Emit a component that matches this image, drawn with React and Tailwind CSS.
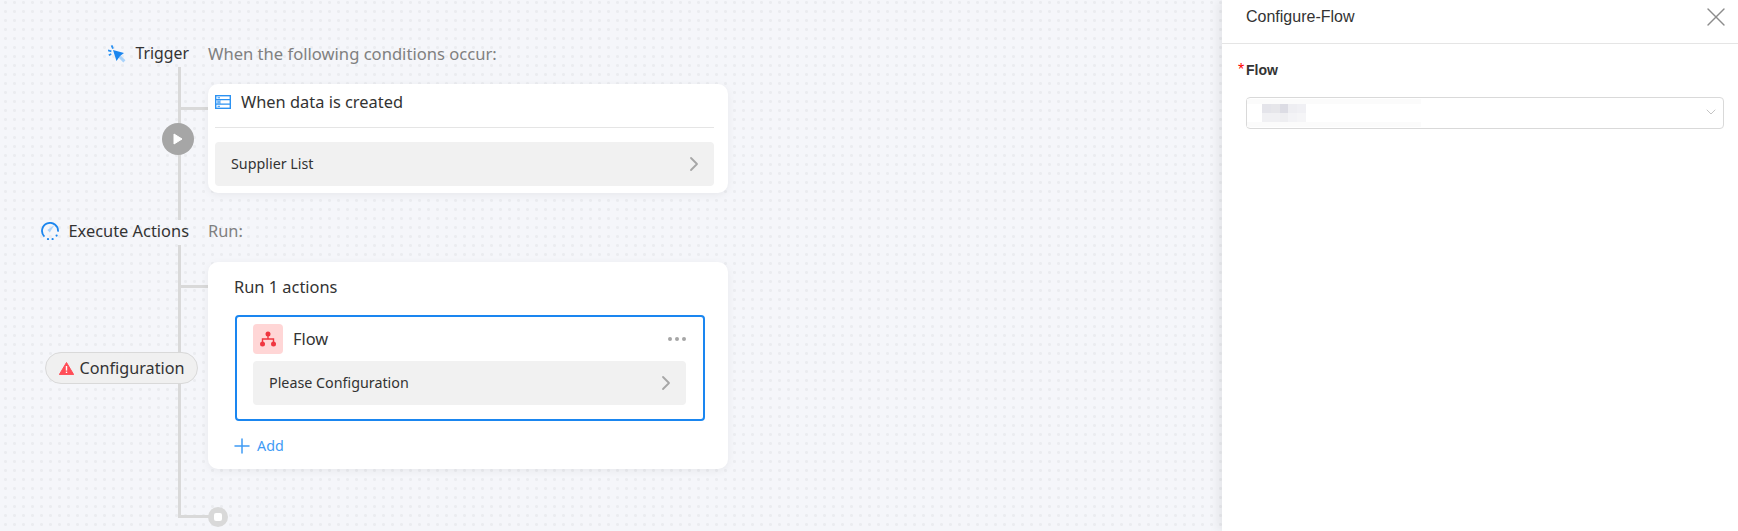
import React from 'react';
import { ChevronRight, ChevronDown, Plus, X } from 'lucide-react';

const sansFont = "font-['Noto_Sans','Open_Sans',sans-serif]";
const arialFont = "font-['Liberation_Sans',Arial,sans-serif]";

// Iconos dibujados a mano
const TriggerIcon = () => (
  <svg width="18" height="18" viewBox="0 0 18 18" fill="none">
    <path d="M11 11 L16.4 16.4" stroke="#a9d3fb" strokeWidth="3" />
    <path d="M5 5 L16 8 L12 11 L8.5 16 Z" fill="#1c86ee" />
    <path d="M3.6 0.4 L5 3.6 M0 5.4 L3.4 6.4 M0.8 10.2 L3.2 9" stroke="#2c92f2" strokeWidth="1.8" />
  </svg>
);

const ExecuteIcon = () => (
  <svg width="18" height="18" viewBox="0 0 18 18" fill="none">
    <path d="M3.4 14.6 A8 8 0 1 1 17 9.6" stroke="#1c86ee" strokeWidth="1.8" />
    <circle cx="7" cy="17" r="1.1" fill="#1c86ee" />
    <circle cx="11.6" cy="17" r="1.1" fill="#1c86ee" />
    <circle cx="15.6" cy="13.6" r="1.1" fill="#1c86ee" />
    <path d="M13.4 3 L6.4 8 L8.8 10.6 Z" fill="#a9d3fb" />
  </svg>
);

const TableIcon = () => (
  <svg width="16" height="14" viewBox="0 0 16 14" fill="none">
    <rect x="0.7" y="0.7" width="14.6" height="12.6" stroke="#2c92f2" strokeWidth="1.4" />
    <rect x="1" y="5" width="5" height="4" fill="#a9d3fb" />
    <path d="M1 4.6 H15 M1 9.2 H15" stroke="#2c92f2" strokeWidth="1.2" />
    <path d="M2.6 2.8 H5 M2.6 7 H5 M2.6 11.3 H5" stroke="#2c92f2" strokeWidth="1" />
  </svg>
);

const FlowIcon = () => (
  <svg width="16" height="16" viewBox="0 0 16 16" fill="#f0353f">
    <circle cx="8" cy="3" r="2.5" />
    <circle cx="2.5" cy="13" r="2.5" />
    <circle cx="13.5" cy="13" r="2.5" />
    <path d="M7.3 4 H8.7 V7.3 H14.2 V11 H12.8 V8.7 H3.2 V11 H1.8 V7.3 H7.3 Z" />
  </svg>
);

const WarningIcon = () => (
  <svg width="15" height="13" viewBox="0 0 15 13">
    <path d="M7.5 0.5 L14.7 12.6 H0.3 Z" fill="#ff4d57" stroke="#ff4d57" strokeLinejoin="round" />
    <rect x="6.8" y="4" width="1.4" height="4.6" fill="#fff" />
    <rect x="6.8" y="9.6" width="1.4" height="1.4" fill="#fff" />
  </svg>
);

const PlayIcon = () => (
  <svg width="10" height="12" viewBox="0 0 10 12">
    <path d="M1 1 L9 6 L1 11 Z" fill="#fff" stroke="#fff" strokeLinejoin="round" />
  </svg>
);

// Fila gris con flecha
const InfoRow = ({ text }) => (
  <div className="flex h-[44px] items-center justify-between rounded bg-[#f1f1f1] pl-4 pr-[8px]">
    <span className="text-[14.3px] text-[#333]">{text}</span>
    <ChevronRight size={24} strokeWidth={1.8} className="text-[#a6a6a6]" />
  </div>
);

// Texto borroso dentro del select
const blurCells = [
  'bg-[#e4e4ea]', 'bg-[#e6e6ea]', 'bg-[#dcdce4]', 'bg-[#eeeef2]', 'bg-[#f0f0f4]',
  'bg-[#f0f0f3]', 'bg-[#f0f0f3]', 'bg-[#eeeef1]', 'bg-[#f3f3f6]', 'bg-[#f5f5f7]',
];

function Canvas() {
  return (
    <div className={`relative min-w-0 flex-1 bg-[#f5f6fa] bg-[radial-gradient(circle,#ebecf0_1.3px,transparent_1.6px)] bg-[length:9px_9px] bg-[position:1px_-2px] ${sansFont}`}>
      {/* Conectores */}
      <div className="absolute left-[178px] top-[67px] h-[153px] w-[3px] bg-[#d9d9d9]" />
      <div className="absolute left-[178px] top-[245px] h-[272px] w-[3px] bg-[#d9d9d9]" />
      <div className="absolute left-[178px] top-[107px] h-[3px] w-[30px] bg-[#d9d9d9]" />
      <div className="absolute left-[178px] top-[285px] h-[3px] w-[30px] bg-[#d9d9d9]" />
      <div className="absolute left-[178px] top-[515px] h-[3px] w-[32px] bg-[#d9d9d9]" />

      {/* Nodos sobre la línea */}
      <div className="absolute left-[162px] top-[123px] flex h-8 w-8 items-center justify-center rounded-full bg-[#a6a6a6]">
        <PlayIcon />
      </div>
      <div className="absolute left-[45px] top-[352px] flex h-8 w-[153px] items-center justify-center gap-[6px] rounded-full border border-[#d9d9d9] bg-[#f0f0f0] text-[16.2px] text-[#333]">
        <WarningIcon />
        <span>Configuration</span>
      </div>
      <div className="absolute left-[208px] top-[507px] flex h-5 w-5 items-center justify-center rounded-full bg-[#d9d9d9]">
        <div className="h-2 w-2 rounded-[2px] bg-white" />
      </div>

      <div className="grid grid-cols-[208px_520px] pt-[40px]">
        <div className="flex h-[26px] items-center justify-end gap-[10px] pr-[19px] pt-[2px] text-[15.8px] text-[#333]">
          <TriggerIcon />
          <span>Trigger</span>
        </div>
        <div className="flex h-[26px] items-center pt-[2px] text-[16.6px] text-[#808080]">When the following conditions occur:</div>

        <div />
        <div className="relative mt-[18px] h-[109px] rounded-[10px] bg-white pb-[7px] pl-[7px] pr-[14px] shadow-[0_2px_8px_rgba(0,0,0,0.06)]">
          <div className="flex h-[44px] items-center gap-[10px] border-b border-[#e5e5e5] pb-[7px]">
            <TableIcon />
            <span className="text-[16.4px] text-[#333]">When data is created</span>
          </div>
          <div className="mt-[14px]">
            <InfoRow text="Supplier List" />
          </div>
        </div>

        <div className="mt-[25px] flex h-[26px] items-center justify-end gap-[9px] pr-[19px] text-[16.4px] text-[#333]">
          <ExecuteIcon />
          <span>Execute Actions</span>
        </div>
        <div className="mt-[25px] flex h-[26px] items-center text-[16.4px] text-[#808080]">Run:</div>

        <div />
        <div className="relative mt-[18px] h-[207px] rounded-[10px] bg-white pl-[27px] pr-[23px] shadow-[0_2px_8px_rgba(0,0,0,0.06)]">
          <div className="-ml-[1px] mb-[2px] flex h-[51px] items-center text-[16.4px] text-[#333]">Run 1 actions</div>
          <div className="h-[106px] rounded border-2 border-[#1a86f0] pl-4 pr-[17px] pt-[7px]">
            <div className="flex h-[30px] items-center justify-between">
              <div className="flex items-center gap-[10px]">
                <div className="flex h-[30px] w-[30px] items-center justify-center rounded bg-[#ffd6d6]">
                  <FlowIcon />
                </div>
                <span className="text-[16.4px] text-[#333]">Flow</span>
              </div>
              <div className="flex gap-[3px]">
                <span className="h-[4px] w-[4px] rounded-full bg-[#a6a6a6]" />
                <span className="h-[4px] w-[4px] rounded-full bg-[#a6a6a6]" />
                <span className="h-[4px] w-[4px] rounded-full bg-[#a6a6a6]" />
              </div>
            </div>
            <div className="mt-[7px]">
              <InfoRow text="Please Configuration" />
            </div>
          </div>
          <div className="-ml-[5px] mt-[13px] flex items-center gap-[3px] text-[14.3px] text-[#3f9bf5]">
            <Plus size={24} strokeWidth={1.5} />
            <span>Add</span>
          </div>
        </div>
      </div>
    </div>
  );
}

function Drawer() {
  return (
    <div className={`relative flex w-[516px] shrink-0 flex-col bg-white shadow-[-4px_0_10px_rgba(0,0,0,0.07)] ${arialFont}`}>
      <div className="flex h-[44px] items-start justify-between border-b border-[#e5e5e5] pl-6 pr-[6px] pt-[8px]">
        <span className="text-[16px] leading-[18px] text-[#333]">Configure-Flow</span>
        <X size={32} strokeWidth={1} className="-mt-[7px] text-[#8c8c8c]" />
      </div>
      <div className="pl-6 pr-[14px] pt-[18px]">
        <div className="relative flex h-4 items-center text-[14px] font-bold text-[#333]">
          <span className="absolute -left-[8px] -top-[1px] text-[16px] font-normal leading-[18px] text-[#ff0000]">*</span>
          Flow
        </div>
        <div className="relative mt-[19px] flex h-8 items-center justify-between rounded border border-[#d9d9d9] pl-[15px] pr-[4px]">
          <div className="absolute left-0 top-[1px] h-[28px] w-[174px] border-y-[5px] border-[#fbfbfb]" />
          <div className="grid w-[44px] grid-cols-5">
            {blurCells.map((cell, i) => (
              <div key={i} className={`h-[9px] ${cell}`} />
            ))}
          </div>
          <ChevronDown size={16} strokeWidth={1} className="-mt-[2px] text-[#a6a6a6]" />
        </div>
      </div>
    </div>
  );
}

export default function App() {
  return (
    <div className="flex h-[531px] w-full overflow-hidden">
      <Canvas />
      <Drawer />
    </div>
  );
}
